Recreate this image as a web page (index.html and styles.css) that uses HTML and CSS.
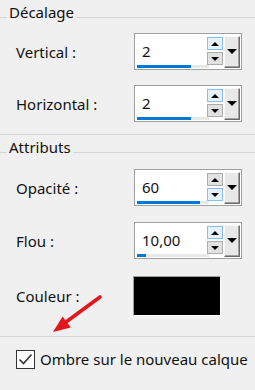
FILE: index.html
```html
<!DOCTYPE html>
<html lang="fr">
<head>
<meta charset="utf-8">
<link rel="stylesheet" href="styles.css">
</head>
<body>
<div class="panel">
  <section class="group">
    <div class="legend"><span>Décalage</span></div>
    <div class="row r1">
      <span class="label">Vertical :</span>
      <div class="spin">
        <div class="field"><div class="value">2</div><div class="track"><div class="fill" style="width:54px"></div></div></div>
        <div class="arrows"><span class="btn hot"><i class="up"></i></span><span class="btn"><i class="down"></i></span></div>
        <span class="drop"><i class="down big"></i></span>
      </div>
    </div>
    <div class="row r2">
      <span class="label">Horizontal :</span>
      <div class="spin">
        <div class="field"><div class="value">2</div><div class="track"><div class="fill" style="width:54px"></div></div></div>
        <div class="arrows"><span class="btn hot"><i class="up"></i></span><span class="btn"><i class="down"></i></span></div>
        <span class="drop"><i class="down big"></i></span>
      </div>
    </div>
  </section>
  <hr class="sep">
  <section class="group">
    <div class="legend"><span>Attributs</span></div>
    <div class="row r3">
      <span class="label">Opacité :</span>
      <div class="spin">
        <div class="field"><div class="value">60</div><div class="track"><div class="fill" style="width:63px"></div></div></div>
        <div class="arrows"><span class="btn"><i class="up"></i></span><span class="btn hot"><i class="down"></i></span></div>
        <span class="drop"><i class="down big"></i></span>
      </div>
    </div>
    <div class="row r4">
      <span class="label">Flou :</span>
      <div class="spin">
        <div class="field"><div class="value">10,00</div><div class="track"><div class="fill" style="width:9px"></div></div></div>
        <div class="arrows"><span class="btn hot"><i class="up"></i></span><span class="btn"><i class="down"></i></span></div>
        <span class="drop"><i class="down big"></i></span>
      </div>
    </div>
    <div class="row r5">
      <span class="label">Couleur :</span>
      <div class="swatch"></div>
    </div>
  </section>
  <hr class="sep sep2">
  <label class="check">
    <span class="box"><svg width="15" height="12" viewBox="0 0 15 12"><path d="M1.5 6.5 L5.5 10.5 L13.5 1.5" fill="none" stroke="#333" stroke-width="1.6"/></svg></span>
    <span>Ombre sur le nouveau calque</span>
  </label>
  <svg class="arrow" width="255" height="390" viewBox="0 0 255 390">
    <line x1="100" y1="297" x2="66" y2="322" stroke="#e3161d" stroke-width="3.6" stroke-linecap="round"/>
    <polygon points="53,332 62.6,316.4 70.8,327.6" fill="#e3161d"/>
  </svg>
</div>
</body>
</html>
```
FILE: styles.css
```css
html, body {
  margin: 0;
  padding: 0;
  background: #f0f0f0;
}
body {
  font-family: "Noto Sans", "Open Sans", sans-serif;
  font-size: 15px;
  color: #111;
  width: 255px;
  height: 390px;
  overflow: hidden;
}
.panel {
  position: relative;
  height: 390px;
}
.group {
  display: flex;
  flex-direction: column;
}
.legend {
  height: 22px;
  display: flex;
  align-items: flex-end;
  position: relative;
}
.legend::before {
  content: "";
  position: absolute;
  left: 0;
  right: 0;
  top: 17px;
  border-top: 1px solid #d7d7d7;
}
.legend span {
  position: relative;
  background: #f0f0f0;
  margin-left: 7px;
  padding: 0 2px;
  line-height: 20px;
}
.row {
  display: grid;
  grid-template-columns: 118px 108px;
  align-items: center;
  padding-left: 16px;
}
.r1 { margin-top: 11px; }
.r2 { margin-top: 15px; }
.r3 { margin-top: 12px; }
.r4 { margin-top: 16px; }
.r5 { margin-top: 17px; }
.label { line-height: 20px; }
.spin {
  box-sizing: border-box;
  width: 108px;
  height: 37px;
  border: 1px solid #a0a0a0;
  background: #fff;
  display: flex;
  padding: 1px;
}
.field {
  flex: 1;
  display: flex;
  flex-direction: column;
  padding-left: 1px;
}
.value {
  flex: 1;
  display: flex;
  align-items: center;
  padding-left: 5px;
  padding-top: 2px;
}
.track {
  height: 3px;
  background: #e8e8e8;
  margin-right: -2px;
}
.fill {
  height: 3px;
  background: #0078d7;
}
.arrows {
  display: flex;
  flex-direction: column;
  gap: 2px;
  margin-top: 2px;
  width: 16px;
}
.btn {
  box-sizing: border-box;
  height: 13px;
  border: 1px solid #adadad;
  background: #e1e1e1;
  display: flex;
  align-items: center;
  justify-content: center;
}
.btn.hot {
  border-color: #8bbce9;
  background: #e5f1fb;
}
.drop {
  box-sizing: border-box;
  width: 16px;
  height: 32px;
  margin: 1px 0 0 1px;
  background: #e8e8e8;
  border-top: 1px solid #f8f8f8;
  border-left: 1px solid #f8f8f8;
  border-right: 1px solid #696969;
  border-bottom: 1px solid #696969;
  box-shadow: inset -1px -1px 0 #a0a0a0;
  display: flex;
  align-items: center;
  justify-content: center;
}
i {
  display: block;
  width: 0;
  height: 0;
}
.up {
  border-left: 4px solid transparent;
  border-right: 4px solid transparent;
  border-bottom: 4px solid #000;
}
.down {
  border-left: 4px solid transparent;
  border-right: 4px solid transparent;
  border-top: 4px solid #000;
}
.down.big {
  border-left-width: 5px;
  border-right-width: 5px;
  border-top-width: 5px;
  margin-top: -2px;
}
.swatch {
  box-sizing: border-box;
  width: 88px;
  height: 40px;
  margin-left: -1px;
  background: #000;
  border-top: 1px solid #a0a0a0;
  border-left: 1px solid #a0a0a0;
  border-right: 1px solid #fff;
  border-bottom: 1px solid #fff;
}
.sep {
  border: 0;
  border-top: 1px solid #d7d7d7;
  margin: 12px 0 0;
  height: 0;
}
.sep2 { margin-top: 20px; }
.check {
  display: flex;
  align-items: center;
  gap: 5px;
  padding-left: 16px;
  margin-top: 12px;
  line-height: 20px;
}
.box {
  box-sizing: border-box;
  width: 19px;
  height: 19px;
  border: 1px solid #333;
  background: #fff;
  display: flex;
  align-items: center;
  justify-content: center;
}
.arrow {
  position: absolute;
  left: 0;
  top: 0;
  pointer-events: none;
}
```
